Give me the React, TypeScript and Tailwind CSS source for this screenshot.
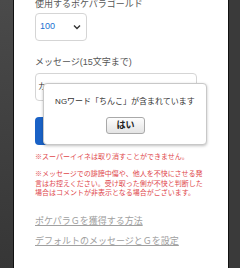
export default function App() {
  const font = { fontFamily: '"Liberation Sans", "Noto Sans CJK JP", sans-serif' };
  return (
    <div className="relative flex h-[268px] w-[240px] overflow-hidden bg-[#3a3a3a]" style={font}>
      <div className="w-[13px] shrink-0 bg-gradient-to-b from-[#4a4a4a] to-[#363636]" />
      <div className="w-px shrink-0 bg-[#111]" />
      <div className="flex-1 bg-white pl-[21px]">
        <div className="-mt-[2px] text-[9px] leading-[12px] text-[#555]">使用するポケパラゴールド</div>
        <div className="mt-[3px] flex h-[28px] w-[52px] items-center justify-between rounded-[4px] border border-[#d5d5d5] pl-[4px] pr-[4px]">
          <span className="text-[9px] text-[#1a6fd1]">100</span>
          <svg width="8" height="6" viewBox="0 0 8 6" className="mr-[1px]">
            <path d="M1 1.5 L4 4.5 L7 1.5" fill="none" stroke="#333" strokeWidth="1.4" />
          </svg>
        </div>
        <div className="mt-[15px] text-[9px] leading-[12px] text-[#555]">メッセージ(15文字まで)</div>
        <div className="mt-[5px] flex h-[28px] w-[162px] items-center rounded-[4px] border border-[#d5d5d5] pl-[2px]">
          <span className="text-[8px] text-[#333]">カ</span>
        </div>
        <div className="mt-[16px] h-[28px] w-[162px] rounded-[4px] bg-[#1a62c6]" />
        <div className="mt-[7px] text-[7px] leading-[10px] text-[#e0474c]">※スーパーイイネは取り消すことができません。</div>
        <div className="mt-[7px] w-[173px] text-[7px] leading-[9.5px] text-[#e0474c]">
          ※メッセージでの誹謗中傷や、他人を不快にさせる発言はお控えください。受け取った側が不快と判断した場合はコメントが非表示となる場合がございます。
        </div>
        <div className="mt-[17.5px] text-[9px] leading-[12px] text-[#a0a0a0] underline">ポケパラＧを獲得する方法</div>
        <div className="mt-[8px] text-[9px] leading-[12px] text-[#a0a0a0] underline">デフォルトのメッセージとＧを設定</div>
      </div>
      <div className="w-px shrink-0 bg-[#111]" />
      <div className="w-[11px] shrink-0 bg-[#3a3a3a]" />

      <div className="absolute left-[43px] top-[83px] flex h-[62px] w-[164px] flex-col items-center rounded-[4px] border border-[#c8c8c8] bg-white shadow-[0_1px_3px_rgba(0,0,0,0.25)]">
        <div className="mt-[12px] text-[8px] leading-[12px] text-[#333]">NGワード「ちんこ」が含まれています</div>
        <button className="mt-[9px] ml-[1px] flex h-[17px] w-[39px] items-center justify-center rounded-[3px] border border-[#a9a9a9] bg-gradient-to-b from-[#fdfdfd] to-[#e4e4e4] text-[9px] font-bold text-[#222]">
          はい
        </button>
      </div>
    </div>
  );
}
